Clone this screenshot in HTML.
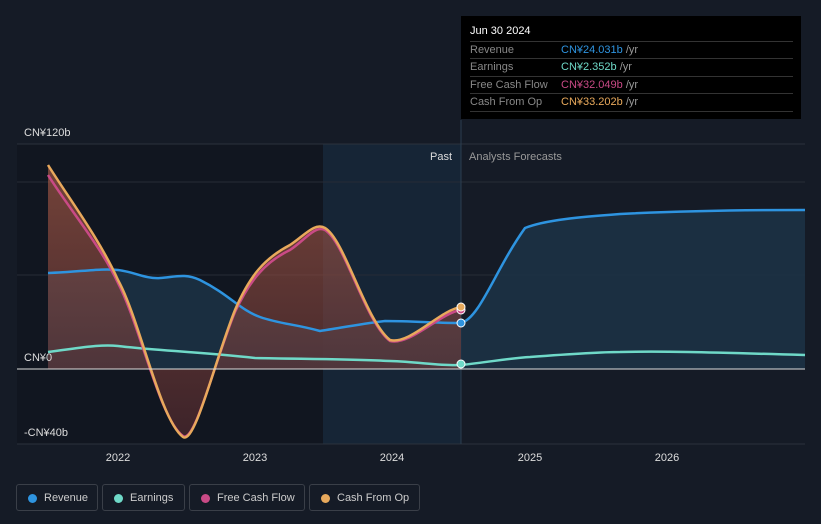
<!DOCTYPE html>
<html><head><meta charset="utf-8"><style>
body{margin:0;width:821px;height:524px;background:#151b26;font-family:"Liberation Sans",sans-serif;overflow:hidden;position:relative}
.tip{position:absolute;left:461px;top:16px;width:340px;height:103px;background:#000;color:#ccc;font-size:11px}
.tip .h{position:absolute;left:9px;top:9px;color:#fff;font-size:11px}
.row{position:absolute;left:9px;width:323px;border-top:1px solid #333;height:17px;line-height:17px;color:#888}
.row span{position:absolute;left:91px}
.leg{position:absolute;top:484px;height:27px;border:1px solid #3a3f48;border-radius:3px;color:#ccc;font-size:11px;line-height:27px;box-sizing:border-box;padding-left:27px}
.leg i{position:absolute;left:11px;top:9px;width:9px;height:9px;border-radius:50%}
</style></head><body>
<svg width="821" height="524" style="position:absolute;left:0;top:0">
<defs><linearGradient id="g" x1="0" y1="0" x2="0" y2="1"><stop offset="0" stop-color="#b5604a" stop-opacity=".6"/><stop offset="1" stop-color="#5a2c30" stop-opacity=".6"/></linearGradient></defs>
<rect x="17" y="144" width="306" height="300" fill="#111620"/>
<rect x="323" y="144" width="138" height="300" fill="#162536"/>
<line x1="17" y1="144" x2="805" y2="144" stroke="#2c323c"/>
<line x1="17" y1="182" x2="805" y2="182" stroke="#262c36"/>
<line x1="17" y1="275" x2="805" y2="275" stroke="#262c36"/>
<line x1="17" y1="444" x2="805" y2="444" stroke="#2c323c"/>
<line x1="461" y1="120" x2="461" y2="444" stroke="#2c3e50"/>
<path d="M48,273 C80,272 100,268 118,270 C135,272 145,279 160,278 C175,277 185,273 200,280 C230,295 240,310 260,317 C280,324 295,324 320,331 C340,328 360,324 385,321 C410,321 440,323 461,323 C480,318 495,270 525,228 C545,220 580,217 620,214 C680,211 740,210 805,210 L805,369 L48,369Z" fill="#1d3448" opacity=".8"/>
<path d="M48,165 C70,200 100,240 118,280 C140,320 160,420 183,437 C195,445 215,360 235,310 C250,275 265,258 290,245 C305,235 315,222 325,228 C345,240 365,320 390,340 C410,345 440,310 461,307 L461,369 L48,369Z" fill="url(#g)"/>
<path d="M48,273 C80,272 100,268 118,270 C135,272 145,279 160,278 C175,277 185,273 200,280 C230,295 240,310 260,317 C280,324 295,324 320,331 C340,328 360,324 385,321 C410,321 440,323 461,323 C480,318 495,270 525,228 C545,220 580,217 620,214 C680,211 740,210 805,210" fill="none" stroke="#2e94e0" stroke-width="2.5"/>
<path d="M48,352 C80,348 100,344 118,346 C150,350 200,352 255,358 C300,359 350,359 390,361 C420,362 440,366 461,365 C490,362 510,358 530,357 C570,354 600,352 620,352 C660,351 700,352 805,355" fill="none" stroke="#6fd9c8" stroke-width="2.5"/>
<path d="M48,175 C70,210 100,245 118,283 C140,325 160,420 183,436 C195,444 215,360 235,312 C250,280 265,262 290,250 C305,240 315,225 325,230 C345,242 365,322 390,341 C410,346 440,313 461,310" fill="none" stroke="#c94a86" stroke-width="2.5"/>
<path d="M48,165 C70,200 100,240 118,280 C140,320 160,420 183,437 C195,445 215,360 235,310 C250,275 265,258 290,245 C305,235 315,222 325,228 C345,240 365,320 390,340 C410,345 440,310 461,307" fill="none" stroke="#e8a95c" stroke-width="2.5"/>
<line x1="17" y1="369" x2="805" y2="369" stroke="#ddd"/>
<circle cx="461" cy="323" r="4" fill="#2e94e0" stroke="#fff"/>
<circle cx="461" cy="364" r="4" fill="#6fd9c8" stroke="#fff"/>
<circle cx="461" cy="310" r="4" fill="#c94a86" stroke="#fff"/>
<circle cx="461" cy="307" r="4" fill="#e8a95c" stroke="#fff"/>
<g font-size="11" fill="#ddd" font-family="Liberation Sans">
<text x="24" y="136">CN¥120b</text><text x="24" y="361">CN¥0</text><text x="24" y="436">-CN¥40b</text>
<text x="452" y="160" text-anchor="end" fill="#ddd">Past</text><text x="469" y="160" fill="#999">Analysts Forecasts</text>
<text x="118" y="461" text-anchor="middle">2022</text><text x="255" y="461" text-anchor="middle">2023</text><text x="392" y="461" text-anchor="middle">2024</text><text x="530" y="461" text-anchor="middle">2025</text><text x="667" y="461" text-anchor="middle">2026</text>
</g>
</svg>
<div class="tip"><div class="h">Jun 30 2024</div>
<div class="row" style="top:25px">Revenue<span style="color:#2e94e0">CN¥24.031b <b style="font-weight:normal;color:#999">/yr</b></span></div>
<div class="row" style="top:42px">Earnings<span style="color:#6fd9c8">CN¥2.352b <b style="font-weight:normal;color:#999">/yr</b></span></div>
<div class="row" style="top:60px">Free Cash Flow<span style="color:#c94a86">CN¥32.049b <b style="font-weight:normal;color:#999">/yr</b></span></div>
<div class="row" style="top:77px;border-bottom:1px solid #333">Cash From Op<span style="color:#e8a95c">CN¥33.202b <b style="font-weight:normal;color:#999">/yr</b></span></div>
</div>
<div class="leg" style="left:16px;width:82px"><i style="background:#2e94e0"></i>Revenue</div>
<div class="leg" style="left:102px;width:83px"><i style="background:#6fd9c8"></i>Earnings</div>
<div class="leg" style="left:189px;width:116px"><i style="background:#c94a86"></i>Free Cash Flow</div>
<div class="leg" style="left:309px;width:111px"><i style="background:#e8a95c"></i>Cash From Op</div>
</body></html>
